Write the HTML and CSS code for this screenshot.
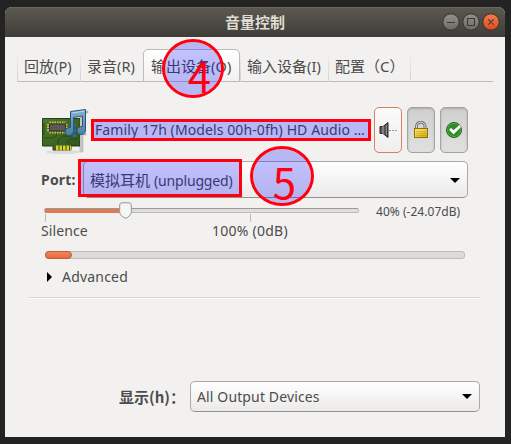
FILE: index.html
```
<!DOCTYPE html>
<html lang="zh-CN">
<head>
<meta charset="utf-8">
<title>音量控制</title>
<link rel="stylesheet" href="styles.css">
</head>
<body>
<main class="window">
  <header class="titlebar">
    <h1>音量控制</h1>
    <div class="controls">
      <svg width="58" height="18" viewBox="0 0 58 18">
        <defs>
          <linearGradient id="grey" x2="0" y2="1"><stop stop-color="#92918a"/><stop offset="1" stop-color="#6b6a65"/></linearGradient>
          <linearGradient id="orange" x2="0" y2="1"><stop stop-color="#f67b55"/><stop offset="1" stop-color="#dd4a1d"/></linearGradient>
        </defs>
        <g stroke="#353430"><circle cx="9" cy="9" r="8.2" fill="url(#grey)"/><circle cx="29" cy="9" r="8.2" fill="url(#grey)"/><circle cx="49" cy="9" r="8.2" fill="url(#orange)"/></g>
        <path d="M5 9.5h8M25.500 5.500h7v7h-7zM46.300 6.300l5.400 5.400m0-5.400l-5.400 5.400" fill="none" stroke="#3b3a35" stroke-width="1.100"/>
      </svg>
    </div>
  </header>
  <nav class="tabs">
    <div class="tab t1">回放<span>(P)</span></div>
    <div class="tab t2">录音<span>(R)</span></div>
    <div class="tab t3 active">输出设备<span>(O)</span></div>
    <div class="tab t4">输入设备<span>(I)</span></div>
    <div class="tab t5">配置（C）</div>
  </nav>
  <section class="device">
    <div class="device-head">
      <svg class="card-icon" width="50" height="50" viewBox="0 0 50 50">
        <defs>
          <linearGradient id="board" x2="1" y2="1"><stop stop-color="#4e7a2e"/><stop offset="1" stop-color="#30521b"/></linearGradient>
          <linearGradient id="note" x2="0" y2="1"><stop stop-color="#86b2d0"/><stop offset="1" stop-color="#477ea5"/></linearGradient>
        </defs>
        <ellipse cx="22" cy="46" rx="17" ry="2" fill="#dcdbd9"/>
        <path d="M39 5h8v2h-5v20h3v2h-3v17h-3z" fill="#c4c4c2" stroke="#999" stroke-width=".5"/>
        <path d="M1.500 12.500H39v27.500H30v4H12v-4H1.500z" fill="url(#board)" stroke="#263f17"/>
        <path d="M39 12v34h2.500V12z" fill="#c4c4c2"/>
        <path d="M3 32h9l4-3M17 38v-4l5-4h9M27 38v-3l3-2h7M3 17v12" stroke="#234314" fill="none" stroke-width=".8"/>
        <path d="M8.500 16.500h16M8.500 26.500h16" stroke="#d5c83d" stroke-width="2" stroke-dasharray="1.500 1"/>
        <path d="M7 18v8M25.500 18v8" stroke="#d5c83d" stroke-width="2" stroke-dasharray="1.500 1"/>
        <rect x="8.500" y="18" width="16" height="7" fill="#5b5956" stroke="#343330"/>
        <path d="M15 42h15" stroke="#d8cf2b" stroke-width="5" stroke-dasharray="2.500 1"/>
        <path d="M33.500 18v13" stroke="#2d65bd" stroke-width="3" stroke-dasharray="3 2"/>
        <path d="M29.500 5.500L44.500 3.500v20.500c0 3-2 4.500-4.500 4.500s-4-1.700-4-3.800c0-2.700 2.700-4.500 5.500-4V10l-9 1.500v13.500c0 3-2 4.500-4.500 4.500s-4-1.700-4-3.800c0-2.700 2.700-4.500 5.500-4z" fill="url(#note)" stroke="#285878"/>
        <path d="M31 7l12.500-2" stroke="#b8d7e9"/>
      </svg>
      <div class="device-name">Family 17h (Models 00h-0fh) HD Audio …</div>
      <div class="actions">
        <div class="action mute"><svg width="18" height="18" viewBox="0 0 18 18"><path d="M1 5.500h3l5-4v15l-5-4H1z" fill="#555" stroke="#292929"/><path d="M4 5v8" stroke="#aaa"/><path d="M7.500 4v10" stroke="#888"/><path d="M10 9.500h8" stroke="#999" stroke-dasharray="2 1"/></svg></div>
        <div class="action pressed"><svg width="18" height="18" viewBox="0 0 18 18"><defs><linearGradient id="gold" x2="1" y2="1"><stop stop-color="#f7eb77"/><stop offset=".5" stop-color="#ebcd39"/><stop offset="1" stop-color="#c6a60e"/></linearGradient></defs><path d="M4.500 10V5.500a4.200 4.200 0 0 1 8.500 0V10" fill="none" stroke="#777" stroke-width="3"/><path d="M4.500 9V5.500a4.200 4.200 0 0 1 8.500 0V9" fill="none" stroke="#ddd"/><rect x="2.500" y="7.500" width="13" height="9" fill="url(#gold)" stroke="#8c7408"/><path d="M4 10.500h10M4 12.500h10M4 14.500h10" stroke="#ae9117" stroke-opacity=".4"/></svg></div>
        <div class="action pressed"><svg width="18" height="18" viewBox="0 0 18 18"><circle cx="9" cy="9" r="7.500" fill="#2b8a22" stroke="#1e6419"/><circle cx="9" cy="9" r="6.500" fill="none" stroke="#77b66a" stroke-width=".7"/><path d="M4 8.700l2-2 2.500 2.500L14.500 4l1.500 2-7.500 7.500z" fill="#fff"/></svg></div>
      </div>
    </div>
    <div class="port-row">
      <strong>Port:</strong>
      <div class="combo port"><span>模拟耳机 <i>(unplugged)</i></span><b class="arrow"></b></div>
    </div>
    <div class="volume-row">
      <div class="scale">
        <div class="track"><div class="fill"></div><svg class="thumb" width="13" height="17" viewBox="0 0 13 17"><path d="M3 .8h7q2.300 0 2.300 2.300v7.200q0 1.500-1.200 2.800L8.500 15.500q-2 1.300-4 0L1.900 13.100Q.7 11.800.7 10.300V3.100Q.7.8 3 .8z" fill="#f5f5f4" stroke="#969592"/></svg></div>
        <div class="marks"><i></i><i></i></div>
        <div class="mark-labels"><span>Silence</span><span>100% (0dB)</span></div>
      </div>
      <div class="value">40% (-24.07dB)</div>
    </div>
    <div class="meter"><div></div></div>
    <div class="advanced"><b></b><span>Advanced</span></div>
  </section>
  <hr>
  <footer>
    <strong>显示(h)：</strong>
    <div class="combo filter"><span>All Output Devices</span><b class="arrow"></b></div>
  </footer>
</main>
<div class="callout name-box"></div>
<div class="callout port-box"></div>
<div class="callout circle four"><span>4</span></div>
<div class="callout circle five"><span>5</span></div>
</body>
</html>
```
FILE: styles.css
```
* { box-sizing: border-box; }
body {
  margin: 0;
  width: 511px;
  height: 444px;
  padding: 7px 6px 7px 5px;
  overflow: hidden;
  background: #232323;
  color: #4c4c4c;
  font: 14px/20px "Noto Sans", "Noto Sans CJK SC", sans-serif;
  white-space: nowrap;
}
i { font-style: normal; }
svg { display: block; flex: none; }
.window {
  height: 430px;
  display: flex;
  flex-direction: column;
  background: #f2f1f0;
  border-radius: 7px 7px 0 0;
  overflow: hidden;
}
.titlebar {
  height: 30px;
  flex: none;
  display: grid;
  grid-template-columns: 63px 1fr 63px;
  align-items: center;
  background: linear-gradient(#5c594f, #3e3d39);
  box-shadow: inset 0 1px #69665b;
}
.titlebar h1 {
  grid-column: 2;
  margin: 0;
  text-align: center;
  font: bold 15px/30px "Noto Sans CJK SC", sans-serif;
  color: #dfdbd2;
}
.tabs {
  height: 33px;
  flex: none;
  display: flex;
  margin: 12px 12px 0;
  background: linear-gradient(#bbb, #bbb) bottom / 100% 1px no-repeat;
}
.tab {
  padding: 6px 0 0 7px;
  font-size: 15px;
  line-height: 23px;
  background: linear-gradient(#f2f1f0, #d2d1d0) left / 1px 32px no-repeat;
}
.tab span { font-size: 14.5px; letter-spacing: .1px; }
.t1 { width: 63px; }
.t2 { width: 63px; }
.t3 { width: 97px; }
.t4 { width: 88px; }
.t5 {
  width: 83px;
  background: linear-gradient(#f2f1f0, #d2d1d0) left / 1px 32px no-repeat, linear-gradient(#f2f1f0, #d2d1d0) right / 1px 32px no-repeat;
}
.tab.active {
  padding: 5px 0 0 7px;
  background: linear-gradient(#fff, #f2f1f0);
  border: 1px solid #bbb;
  border-radius: 5px 5px 0 0;
}
.device { height: 214px; padding: 25px 37px 0 36px; flex: none; }
.device-head { height: 47px; display: flex; }
.card-icon { margin-top: -1px; }
.device-name { width: 283px; padding: 13px 0 0 4px; letter-spacing: .1px; }
.actions { display: flex; gap: 5px; }
.action {
  width: 28px;
  height: 46px;
  display: flex;
  align-items: center;
  justify-content: center;
  border: 1px solid #a4a3a1;
  border-radius: 5px;
}
.mute { background: linear-gradient(#fafafa, #f0efee); border-color: #d48262; }
.pressed { background: linear-gradient(#cfcfcf, #e0e0df); box-shadow: inset 0 1px 2px #aaa; }
.port-row { display: flex; align-items: center; height: 37px; margin-top: 7px; }
strong { font-weight: bold; }
.port-row strong { width: 42px; letter-spacing: .2px; }
.combo {
  display: flex;
  align-items: center;
  justify-content: space-between;
  border: 1px solid #aaa9a7;
  border-bottom-color: #92918f;
  border-radius: 5px;
  background: linear-gradient(#fff, #ebeae9);
}
.port { width: 385px; height: 37px; padding: 1px 7px 0 6px; font-size: 15px; }
.port i { font-size: 14px; letter-spacing: -.15px; }
.arrow { border: 5px solid transparent; border-top-color: #000; border-bottom: 0; }
.volume-row { display: flex; height: 43px; padding-top: 10px; }
.scale { width: 335px; }
.track { position: relative; width: 315px; height: 5px; margin-left: 3px; border-radius: 2px; background: #dededd; border: 1px solid #bcbbb9; border-top-color: #999; }
.fill { width: 80px; height: 4px; background: #e07a51; }
.thumb { position: absolute; left: 74px; top: -7px; }
.marks { display: flex; width: 206px; height: 8px; margin: 1px 0 0 4px; justify-content: space-between; }
.marks i { width: 1px; background: #bbb; }
.mark-labels { display: flex; line-height: 20px; margin-top: -1px; }
.mark-labels span:first-child { width: 171px; letter-spacing: .1px; }
.mark-labels span:last-child { letter-spacing: .25px; }
.value { font-size: 12px; line-height: 16px; margin-top: -4px; letter-spacing: .03px; }
.meter { width: 420px; height: 8px; margin: 10px 0 0 4px; border: 1px solid #bdbcba; border-radius: 3px; background: #dcdbda; }
.meter div { width: 27px; height: 8px; margin: -1px; background: linear-gradient(#f4855b, #e66b40); border: 1px solid #c65b37; border-radius: 4px; }
.advanced { display: flex; align-items: center; height: 20px; margin-top: 8px; padding-left: 6px; gap: 10px; letter-spacing: .2px; }
.advanced b { border: 5px solid transparent; border-left-color: #000; border-right: 0; }
hr { width: 452px; height: 2px; flex: none; margin: 1px 0 0 24px; border: 0; border-top: 1px solid #d7d6d5; border-bottom: 1px solid #fff; }
footer { display: flex; align-items: center; height: 31px; margin: 82px 25px 0 114px; flex: none; }
footer strong { width: 71px; font-family: "Noto Sans CJK SC", sans-serif; font-size: 15px; }
.filter { width: 290px; height: 31px; padding: 0 7px 0 6px; }
.filter span { letter-spacing: .13px; }
.callout { position: absolute; border: 3px solid #ff0010; background: rgba(0, 0, 255, .24); background-clip: padding-box; }
.name-box { left: 91px; top: 119px; width: 280px; height: 22px; }
.port-box { left: 78px; top: 159px; width: 164px; height: 38px; }
.circle { border-radius: 50%; color: #ff0010; font: 42px/42px "Noto Sans CJK SC", sans-serif; text-align: center; }
.four { left: 162px; top: 39px; width: 62px; height: 59px; padding: 12px 0 0 13px; }
.five { left: 250px; top: 146px; width: 64px; height: 60px; padding: 11px 0 0 5px; }
```
